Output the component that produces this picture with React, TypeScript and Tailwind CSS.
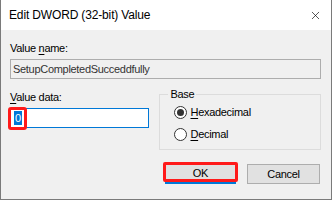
import { X } from "lucide-react";

function Radio({ checked, label }: { checked: boolean; label: React.ReactNode }) {
  return (
    <div className="flex items-center h-[14px]">
      <span className="w-[13px] h-[13px] rounded-full border border-[#333333] bg-white flex items-center justify-center">
        {checked && <span className="w-[7px] h-[7px] rounded-full bg-[#333333]" />}
      </span>
      <span className="ml-[3px] leading-[14px]">{label}</span>
    </div>
  );
}

export default function App() {
  return (
    <div
      className="w-[332px] h-[200px] flex flex-col border border-t-0 border-[#7a7a7a] bg-[#f0f0f0] text-[11px] text-black tracking-[-0.3px] overflow-hidden"
      style={{ fontFamily: '"Liberation Sans", Arial, sans-serif' }}
    >
      <div className="h-[30px] bg-white flex items-center justify-between pl-[8px] pr-[9px] shrink-0">
        <span className="text-[12px] tracking-[-0.15px] text-black">Edit DWORD (32-bit) Value</span>
        <X size={13} strokeWidth={1.2} className="text-black" />
      </div>

      <div className="flex flex-col pl-[9px] pr-[10px] pt-[11px]">
        <div className="leading-[15px]">
          Value <span className="underline underline-offset-2">n</span>ame:
        </div>
        <div className="mt-[3px] h-[20px] border border-[#adadad] bg-[#f0f0f0] flex items-center px-[2px] text-[#333]">
          SetupCompletedSucceddfully
        </div>

        <div className="flex mt-[9px]">
          <div className="flex flex-col w-[140px]">
            <div className="leading-[15px] mt-[2px]">
              <span className="underline underline-offset-2">V</span>alue data:
            </div>
            <div className="relative mt-[3px] h-[20px] border border-[#0078d7] bg-white flex items-center pl-[3px]">
              <span className="bg-[#0078d7] text-white leading-[14px] px-[1px]">0</span>
              <span className="absolute left-[-3px] top-[-2px] w-[19px] h-[23px] border-[3px] border-[#ff1a1a] rounded-[3px]" />
            </div>
          </div>

          <fieldset className="ml-[10px] w-[162px] h-[62px] border border-[#dcdcdc] px-[14px] pt-[5px]">
            <legend className="ml-[-6px] px-[2px] leading-[12px]">Base</legend>
            <div className="flex flex-col gap-[8px]">
              <Radio
                checked
                label={
                  <>
                    <span className="underline underline-offset-2">H</span>exadecimal
                  </>
                }
              />
              <Radio
                checked={false}
                label={
                  <>
                    <span className="underline underline-offset-2">D</span>ecimal
                  </>
                }
              />
            </div>
          </fieldset>
        </div>

        <div className="flex justify-end gap-[11px] mt-[14px] pr-[1px]">
          <div className="relative w-[71px] h-[20px] border border-[#0078d7] border-b-2 bg-[#e1e1e1] flex items-center justify-center">
            OK
            <span className="absolute left-[-3px] top-[-3px] w-[75px] h-[20px] border-[3px] border-[#ff1a1a] rounded-[2px]" />
          </div>
          <div className="w-[73px] h-[20px] border border-[#adadad] bg-[#e1e1e1] flex items-center justify-center">
            Cancel
          </div>
        </div>
      </div>
    </div>
  );
}
